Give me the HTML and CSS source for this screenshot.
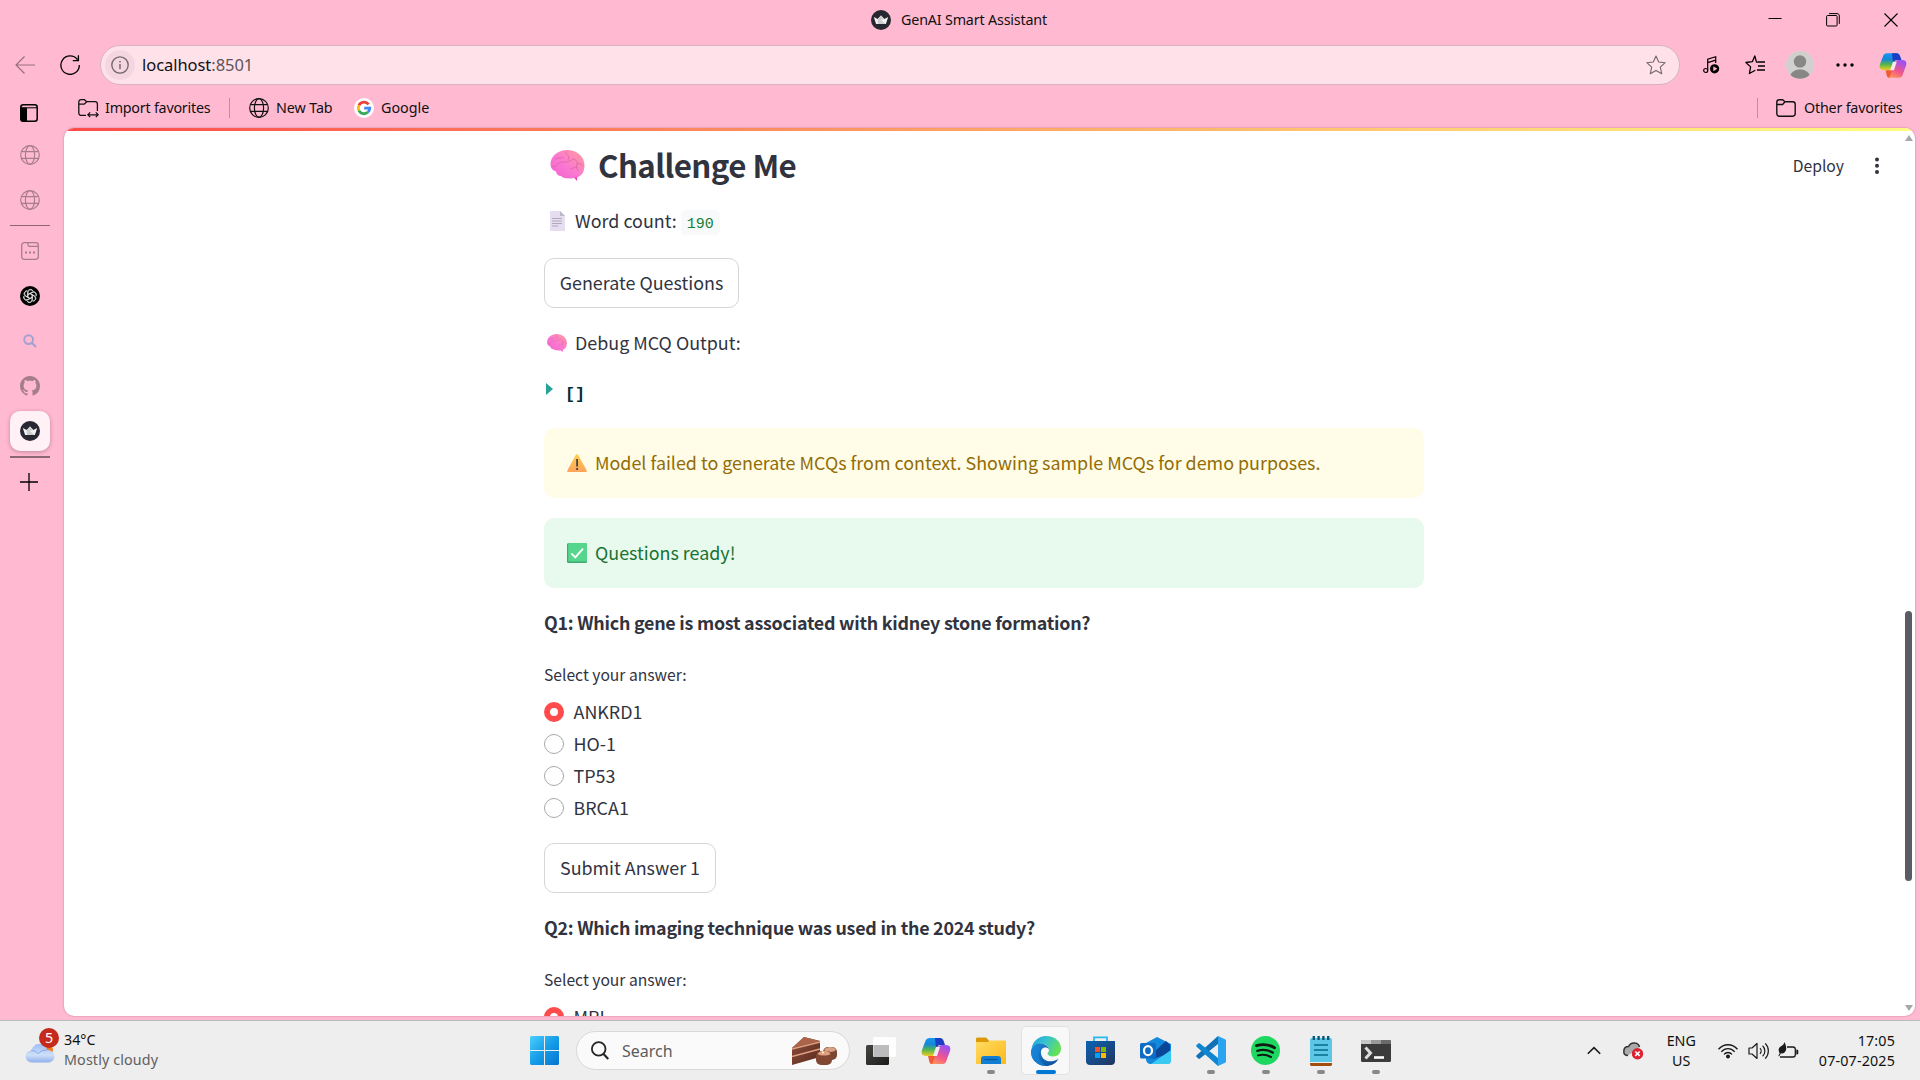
FILE: index.html
```html
<!DOCTYPE html>
<html lang="en">
<head>
<meta charset="utf-8">
<title>GenAI Smart Assistant</title>
<link rel="stylesheet" href="styles.css">
</head>
<body>
<svg class="defs" width="0" height="0" aria-hidden="true">
  <defs>
    <linearGradient id="brainFill" x1="0" y1="1" x2="1" y2="0"><stop offset="0" stop-color="#f062cc"/><stop offset=".45" stop-color="#fb78d2"/><stop offset="1" stop-color="#ff9c9a"/></linearGradient>
    <linearGradient id="copA" x1="0" y1="0" x2="0" y2="1"><stop offset="0" stop-color="#1696f0"/><stop offset=".35" stop-color="#1687d8"/><stop offset=".65" stop-color="#52b550"/><stop offset="1" stop-color="#f4cc20"/></linearGradient>
    <linearGradient id="copB" x1="0" y1="1" x2=".5" y2="0"><stop offset="0" stop-color="#ffa052"/><stop offset=".5" stop-color="#f2558c"/><stop offset="1" stop-color="#a052ee"/></linearGradient>
    <linearGradient id="cloudFill" x1="0" y1="0" x2="0" y2="1"><stop offset="0" stop-color="#9dbdf5"/><stop offset=".6" stop-color="#cfdff9"/><stop offset="1" stop-color="#8fb0ea"/></linearGradient>
    <linearGradient id="winFill" x1="0" y1="0" x2="1" y2="1"><stop offset="0" stop-color="#4ad0ff"/><stop offset=".5" stop-color="#159de8"/><stop offset="1" stop-color="#0672d0"/></linearGradient>
    <linearGradient id="edgeTop" x1="0" y1="0" x2="1" y2=".4"><stop offset="0" stop-color="#1f9fe0"/><stop offset=".5" stop-color="#35c2d0"/><stop offset="1" stop-color="#64e05a"/></linearGradient>
    <linearGradient id="edgeLow" x1="0" y1="0" x2="1" y2="1"><stop offset="0" stop-color="#1c8bdc"/><stop offset="1" stop-color="#0c4a98"/></linearGradient>
    <linearGradient id="folderFill" x1="0" y1="0" x2="1" y2="1"><stop offset="0" stop-color="#ffdb62"/><stop offset="1" stop-color="#fdb81a"/></linearGradient>
    <linearGradient id="storeFill" x1="0" y1="0" x2="1" y2="1"><stop offset="0" stop-color="#0a64b4"/><stop offset="1" stop-color="#22345e"/></linearGradient>
    <linearGradient id="warnFill" x1="0" y1="0" x2="0" y2="1"><stop offset="0" stop-color="#ffd04a"/><stop offset="1" stop-color="#fca45c"/></linearGradient>
    <linearGradient id="paneFill" x1="0" y1="0" x2="1" y2="1"><stop offset="0" stop-color="#44443f"/><stop offset="1" stop-color="#1c1c1c"/></linearGradient>
    <linearGradient id="cakeFill" x1="0" y1="0" x2="1" y2="1"><stop offset="0" stop-color="#8d4f3b"/><stop offset="1" stop-color="#5a2a1e"/></linearGradient>
    <symbol id="globe" viewBox="0 0 20 20"><g fill="none" stroke="currentColor" stroke-width="1.2"><circle cx="10" cy="10" r="9.3"/><ellipse cx="10" cy="10" rx="4.6" ry="9.3"/><path d="M1.5 6.6h17M1.5 13.4h17"/></g></symbol>
    <symbol id="brain" viewBox="0 0 34 31"><path d="M22 26l4.500 5 .3-6z" fill="#f03fbd"/><path d="M0 14C0 6.500 7 0 16.500 0S34 6 34 15.500c0 7-3.500 11.500-9 12-3 1.500-12 1.500-14.500-1.500-2.500 0-4.500-1.500-5-4.500C2 20.500 0 18 0 14z" fill="url(#brainFill)"/><path d="M1 16c4 2.500 5-2 8.500-3.500 3.500-1 8 .5 11.500-2.500M5 9c2.500-2 5 .5 8-2M16 2c-2 2 4 3.500 2 7M22 9c3 0 5 2 5 5 2-1 4.500 0 6 2M20 19c3 0 4-3 7-2M27 14c-2 2-1 5 1 7" fill="none" stroke="#d8609a" stroke-width=".9" stroke-linecap="round" opacity=".75"/></symbol>
    <symbol id="crown" viewBox="0 0 20 20"><circle cx="10" cy="10" r="10" fill="#262731"/><path d="M2.800 7l3.900 1.900L10 5.600l3.300 3.300L17.200 7l-2.300 6.900H5.100z" fill="#f2f2f2"/><path d="M6.700 9.100L10 5.600l3.300 3.500-3.300.9 4.700 3.900H7z" fill="#cdcdcd"/></symbol>
    <symbol id="copilot" viewBox="0 0 30 28"><path d="M9 1h11l-3 9c-1 3-2 8-5 9H5c-4 0-5-3-4-6L4 5c1-3 2-4 5-4z" fill="url(#copA)"/><path d="M14 1h5c2 0 3 1 4 4l1 3h-5c-2 0-3 1-4 3z" fill="#1b3ec4"/><path d="M21 8h4c4 0 5 3 4 6l-3 8c-1 4-2 5-5 5H10l3-8c1-4 3-11 8-11z" fill="url(#copB)"/><path d="M8 19h6l-2 6c-.5 1.500-1 2-2 2-2-1-2-5-3-8z" fill="#f25a34"/><path d="M15 10h4l-3 9h-4z" fill="#f7e9f4"/></symbol>
    <symbol id="folder" viewBox="0 0 20 18"><path d="M.8 4V3.400C.8 1.800 1.800.8 3.300.8h3.400l2.200 2h7.800c1.600 0 2.500 1 2.500 2.500v9.300c0 1.600-1 2.600-2.500 2.600H3.300c-1.500 0-2.500-1-2.500-2.600zM.8 5.500h5.800L9 2.800" fill="none" stroke="currentColor" stroke-width="1.400" stroke-linejoin="round"/></symbol>
  </defs>
</svg>
<div class="browser">
  <header class="titlebar">
    <div class="tab-title"><svg width="20" height="20"><use href="#crown"/></svg><span class="t-title">GenAI Smart Assistant</span></div>
    <div class="window-buttons">
      <svg width="14" height="14" viewBox="0 0 14 14"><path d="M0.500 5.500h13" stroke="#000"/></svg>
      <svg width="14" height="14" viewBox="0 0 14 14" fill="none" stroke="#000"><rect x=".6" y="2.500" width="10.500" height="10.500" rx="1"/><path d="M3 .6h8c1.500 0 2.300.8 2.300 2.300v8"/></svg>
      <svg width="14" height="14" viewBox="0 0 14 14"><path d="M.5.5l13 13M13.500.5l-13 13" stroke="#000" stroke-width="1.100"/></svg>
    </div>
  </header>
  <div class="toolbar">
    <svg class="back" width="20" height="18" viewBox="0 0 20 18"><path d="M9.500.5L1 9l8.500 8.500M1 9h19" fill="none" stroke="#97707f" stroke-width="1.200"/></svg>
    <svg class="reload" width="20" height="20" viewBox="0 0 20 20"><path d="M17.500 4.700A9.200 9.200 0 1 0 19.300 10M18.400.2v5.500h-5.600" fill="none" stroke="#000" stroke-width="1.300"/></svg>
    <div class="address">
      <span class="site-info"><svg width="18" height="18" viewBox="0 0 18 18"><circle cx="9" cy="9" r="8.200" fill="none" stroke="#6f636a" stroke-width="1.300"/><path d="M9 8v5M9 5v1.600" stroke="#6f636a" stroke-width="1.400"/></svg></span>
      <span class="t-url">localhost<span class="port">:8501</span></span>
      <svg class="star" width="20" height="20" viewBox="0 0 20 20"><path d="M10 1l2.700 6 6.500.7-4.900 4.400 1.400 6.600L10 15.400l-5.700 3.300 1.400-6.600L.8 7.700 7.300 7z" fill="none" stroke="#75666e" stroke-width="1.100" stroke-linejoin="round"/></svg>
    </div>
    <svg class="music" width="17" height="18" viewBox="0 0 17 18"><g fill="none" stroke="#000" stroke-width="1.200"><circle cx="2.700" cy="14.500" r="2"/><path d="M4.700 14.500V3.300l8-2.500V7M4.700 6.600l8-2.500"/></g><circle cx="11.600" cy="12.800" r="4.600"/><path d="M10.300 10.300l4 2.500-4 2.500z" fill="#ffbad2"/></svg>
    <svg class="favs" width="21" height="20" viewBox="0 0 21 20"><path d="M13 7.200h-1.500L9.800 1 7.300 6.700.9 7.500l4.700 4.400-1.200 6.600 5.900-3.200M13 7h7M13 11h7M12 15h8" fill="none" stroke="#000" stroke-width="1.300" stroke-linejoin="round"/></svg>
    <svg class="avatar" width="28" height="28" viewBox="0 0 28 28"><circle cx="14" cy="14" r="14" fill="#d2d0ce"/><circle cx="14" cy="10.500" r="6.200" fill="#898785"/><path d="M4.500 24c2-7.500 17-7.500 19 0a14 14 0 0 1-19 0z" fill="#898785"/></svg>
    <svg class="more" width="18" height="4" viewBox="0 0 18 4"><circle cx="2" cy="2" r="1.700"/><circle cx="9" cy="2" r="1.700"/><circle cx="16" cy="2" r="1.700"/></svg>
    <svg class="cop" width="28" height="27"><use href="#copilot"/></svg>
  </div>
  <nav class="favorites">
    <svg class="import" width="21" height="19" viewBox="0 0 21 19"><path d="M8 16.400H3.400C1.900 16.400.8 15.400.8 13.900V3C.8 1.600 1.800.7 3.200.7h3.200l2.300 2H17c1.500 0 2.400 1 2.400 2.400v7M.8 5.100h5.400l2.500-2.400" fill="none" stroke="#111" stroke-width="1.300"/><path d="M10 15.800h10M12.200 13.400L9.800 15.800l2.400 2.400M17.800 13.400l2.400 2.400-2.400 2.400" fill="none" stroke="#111" stroke-width="1.200"/></svg>
    <span class="t-import">Import favorites</span>
    <i class="sep"></i>
    <svg class="newtab" width="20" height="20"><use href="#globe"/></svg>
    <span class="t-newtab">New Tab</span>
    <svg class="google" width="20" height="20" viewBox="0 0 20 20"><circle cx="10" cy="10" r="10" fill="#fff"/><g fill="none" stroke-width="2.800"><path d="M14.600 6.300A5.800 5.800 0 0 0 4.900 7.300" stroke="#ea4335"/><path d="M4.900 7.300a5.800 5.800 0 0 0 0 5.400" stroke="#fbbc05"/><path d="M4.900 12.700a5.800 5.800 0 0 0 8.900 1.600" stroke="#34a853"/><path d="M13.800 14.300a5.800 5.800 0 0 0 2-4.100h-5.600" stroke="#4285f4"/></g></svg>
    <span class="t-google">Google</span>
    <i class="sep sep-right"></i>
    <svg class="folder" width="20" height="18"><use href="#folder"/></svg>
    <span class="t-other">Other favorites</span>
  </nav>
  <div class="body">
    <aside class="rail">
      <div class="slot slot-first"><svg width="18" height="18" viewBox="0 0 18 18"><rect x=".8" y=".8" width="16.400" height="16.400" rx="2.500" fill="none" stroke="#000" stroke-width="1.500"/><path d="M1 4.200h5.500v13H3c-1.500 0-2-1-2-2zM1 3.800h16" stroke="#000" stroke-width="1"/></svg></div>
      <div class="slot dim"><svg width="20" height="20"><use href="#globe"/></svg></div>
      <div class="slot dim"><svg width="20" height="20"><use href="#globe"/></svg></div>
      <i class="rule"></i>
      <div class="slot dim"><svg width="18" height="18" viewBox="0 0 18 18"><rect x=".7" y=".7" width="16.600" height="16.600" rx="2.500" fill="none" stroke="currentColor" stroke-width="1.300"/><path d="M7 .8v2c0 1 .5 1.600 1.500 1.600H17" fill="none" stroke="currentColor" stroke-width="1.200"/><path d="M4 10.400h2M8 10.400h2M12 10.400h2" stroke="currentColor" stroke-width="2"/></svg></div>
      <div class="slot"><svg width="20" height="20" viewBox="0 0 20 20"><circle cx="10" cy="10" r="10"/><g fill="none" stroke="#e8e8e8" stroke-width=".8"><path id="petal" d="M8 11.200V6.600c0-3 3.800-3.700 5.200-1.500M8 8.400l4.100-2.300c2.600-1.300 4.900 1 4 3.500"/><use href="#petal" transform="rotate(60 10 10)"/><use href="#petal" transform="rotate(120 10 10)"/><use href="#petal" transform="rotate(180 10 10)"/><use href="#petal" transform="rotate(240 10 10)"/><use href="#petal" transform="rotate(300 10 10)"/></g></svg></div>
      <div class="slot"><svg width="14" height="14" viewBox="0 0 14 14"><circle cx="5.600" cy="5.600" r="4.400" fill="none" stroke="#a3a0d2" stroke-width="1.900"/><path d="M8.800 8.800l4.200 4.200" stroke="#a3a0d2" stroke-width="2.200"/></svg></div>
      <div class="slot"><svg width="20" height="20" viewBox="0 0 16 16"><path fill="#a77d8d" d="M8 0C3.580 0 0 3.580 0 8c0 3.540 2.290 6.530 5.470 7.590.4.070.55-.17.55-.38 0-.19-.01-.82-.01-1.490-2.010.37-2.530-.49-2.690-.94-.09-.23-.48-.94-.82-1.130-.28-.15-.68-.52-.01-.53.63-.01 1.080.58 1.230.82.72 1.210 1.870.87 2.330.66.070-.52.28-.87.510-1.070-1.780-.2-3.640-.89-3.640-3.950 0-.87.310-1.590.82-2.150-.08-.2-.36-1.020.08-2.120 0 0 .67-.21 2.200.82.640-.18 1.320-.27 2-.27s1.360.09 2 .27c1.530-1.040 2.200-.82 2.200-.82.440 1.100.160 1.920.080 2.120.510.560.820 1.270.820 2.150 0 3.070-1.870 3.750-3.650 3.950.290.250.540.730.540 1.480 0 1.070-.01 1.930-.01 2.200 0 .21.150.46.550.38A8.010 8.010 0 0 0 16 8c0-4.420-3.580-8-8-8z"/></svg></div>
      <div class="slot"><span class="active"><svg width="20" height="20"><use href="#crown"/></svg></span></div>
      <i class="rule rule-thick"></i>
      <div class="slot slot-plus"><svg width="18" height="18" viewBox="0 0 18 18"><path d="M9 0v18M0 9h18" stroke="#000" stroke-width="1.300"/></svg></div>
    </aside>
    <main class="page">
      <div class="app">
        <section class="content">
          <h2 class="heading"><svg width="35" height="31"><use href="#brain"/></svg><span>Challenge Me</span></h2>
          <p class="line line-count"><svg class="doc" width="15" height="20" viewBox="0 0 15 20"><path d="M0 0h10l5 5v15H0z" fill="#e6def0"/><path d="M10 0l5 5h-5z" fill="#bfb6ca"/><path d="M2 7.500h10M2 10h10M2 12.500h10M2 15h6" stroke="#b0a8ba"/></svg><span>Word count:</span><code>190</code></p>
          <button class="btn btn-generate"><span>Generate Questions</span></button>
          <p class="line line-debug"><svg class="mini-brain" width="20" height="18"><use href="#brain"/></svg><span>Debug MCQ Output:</span></p>
          <div class="json"><i></i><span>[]</span></div>
          <div class="alert warning"><svg width="20" height="18" viewBox="0 0 20 18"><path d="M8.900.8c.5-.9 1.700-.9 2.200 0l8.600 15.600c.4.800 0 1.600-.9 1.600H1.200c-.9 0-1.300-.8-.9-1.600z" fill="url(#warnFill)"/><path d="M9.200 5h1.800v7.400H9.200zM9.200 14h1.800v1.900H9.200z" fill="#48434a"/></svg><span>Model failed to generate MCQs from context. Showing sample MCQs for demo purposes.</span></div>
          <div class="alert success"><svg width="20" height="20" viewBox="0 0 20 20"><rect width="20" height="20" rx="1.500" fill="#3fa873"/><rect x="1.200" width="18.800" height="18.500" rx="1" fill="#55d68c"/><path d="M4.300 10.400l4 4 7.700-8.700" fill="none" stroke="#fff" stroke-width="1.900"/></svg><span>Questions ready!</span></div>
          <p class="question">Q1: Which gene is most associated with kidney stone formation?</p>
          <p class="label">Select your answer:</p>
          <div class="option"><i class="radio on"></i><span>ANKRD1</span></div>
          <div class="option"><i class="radio"></i><span>HO-1</span></div>
          <div class="option"><i class="radio"></i><span>TP53</span></div>
          <div class="option"><i class="radio"></i><span>BRCA1</span></div>
          <button class="btn btn-submit"><span>Submit Answer 1</span></button>
          <p class="question">Q2: Which imaging technique was used in the 2024 study?</p>
          <p class="label">Select your answer:</p>
          <div class="option"><i class="radio on"></i><span>MRI</span></div>
        </section>
        <div class="actions"><span class="t-deploy">Deploy</span><svg width="4" height="18" viewBox="0 0 4 18" fill="#31333f"><circle cx="2" cy="2.500" r="2"/><circle cx="2" cy="8.800" r="2"/><circle cx="2" cy="15.100" r="2"/></svg></div>
        <div class="scroll"><i class="up"></i><i class="thumb"></i><i class="down"></i></div>
      </div>
    </main>
  </div>
</div>
<footer class="taskbar">
  <div class="weather">
    <span class="weather-icon"><svg width="30" height="20" viewBox="0 0 30 20"><circle cx="23" cy="7" r="5" fill="#f27a1c"/><path d="M7 19.500a6 6 0 0 1-.8-12C7.500 3.500 10.500.7 14.500.7c4 0 7 2.800 7.700 6.300 4 0 7.300 2.500 7.300 6.200 0 3.800-3 6.300-6.500 6.300z" fill="url(#cloudFill)"/><path d="M6 7.800c3-.5 6 .8 7 3 2-2.500 5-4 9-3.800" fill="none" stroke="#84a8e8"/></svg><b class="badge">5</b></span>
    <span class="weather-text"><span class="t-temp">34°C</span><span class="t-cloudy">Mostly cloudy</span></span>
  </div>
  <div class="apps">
    <svg class="start" width="29" height="29" viewBox="0 0 29 29"><path d="M1 0h13v14H0V1zM15 0h13l1 1v13H15zM0 15h14v14H1l-1-1zM15 15h14v13l-1 1H15z" fill="url(#winFill)"/></svg>
    <div class="search">
      <svg width="18" height="19" viewBox="0 0 18 19"><circle cx="7.700" cy="7.900" r="6.800" fill="none" stroke="#252525" stroke-width="1.800"/><path d="M12.600 13l4.700 5" stroke="#252525" stroke-width="2.200"/></svg>
      <span class="t-search">Search</span>
      <svg class="cake" width="46" height="30" viewBox="0 0 46 30"><path d="M0 12L12 1l16 4v16L0 29z" fill="url(#cakeFill)"/><path d="M0 12L12 1l16 4z" fill="#aa6449"/><path d="M0 13L28 6M0 20.500L28 13" stroke="#dfa083" stroke-width="1.600"/><rect x="31" y="11" width="14" height="13" rx="5" fill="#7b4632"/><path d="M32 14c2-4 11-4 12 0-3 3-9 2-12 0z" fill="#d9a184"/><rect x="24" y="15" width="16" height="14" rx="5" fill="#814733"/><path d="M25.500 18c2-4.500 12-4.500 13 0-3 2-10 2-13 0z" fill="#dda17e"/><circle cx="31" cy="16.500" r="1" fill="#fff0d8"/></svg>
    </div>
    <div class="app-slot"><svg width="30" height="28" viewBox="0 0 30 28"><rect y="8" width="23" height="20" rx="1.500" fill="url(#paneFill)"/><rect x="7" width="23" height="20" rx="1.500" fill="#fff" opacity=".9"/><rect x="7.500" y="8" width="15.500" height="12" fill="#bcbcbc"/></svg></div>
    <div class="app-slot"><svg width="30" height="28"><use href="#copilot"/></svg></div>
    <div class="app-slot running"><svg width="30" height="28" viewBox="0 0 30 28"><path d="M0 2c0-1 .5-1.500 1.500-1.500H10L13 3.500V9H0z" fill="#dc9a08"/><path d="M0 5h12l2-1.500h16V27H0z" fill="url(#folderFill)"/><path d="M5 27v-5c0-2 1-3 3-3h14c2 0 3 1 3 3v5z" fill="#1180d4"/><path d="M8.500 22.500h13" stroke="#0a549d" stroke-width="1.300"/></svg></div>
    <div class="app-slot current"><svg width="30" height="30" viewBox="0 0 30 30"><path d="M.5 13C1.500 5.500 7.500 0 15 0c9 0 15 5.500 15 12.500 0 5-3.500 8-8 8-3.500 0-5.500-1.500-5.500-3 0-1 1.500-1.500 1.500-3.500C18 10 13 7 8.500 8 4.500 8.500 2 10.500.5 13z" fill="url(#edgeTop)"/><path d="M0 15C1 10 5 7 10 7.500c4.500.5 8 3.500 8 6.500 0 0-.5-2.500-3.500-2.500-4 0-5.500 4-4 8 2 5.500 9 8 17 3.500-2.500 4.500-7.500 7-12.500 7C6 30-.5 23 0 15z" fill="url(#edgeLow)"/><path d="M10 12c-5 5-2.500 13 5 18C6 30-.5 23 0 15c.5-3 4-5.500 10-3z" fill="#1585d8" opacity=".65"/></svg></div>
    <div class="app-slot"><svg width="29" height="29" viewBox="0 0 29 29"><path d="M8 6V1.300h13V6" fill="none" stroke="#28b9f0" stroke-width="1.800"/><path d="M0 5h29v20c0 2.500-1.500 4-4 4H4c-2.500 0-4-1.500-4-4z" fill="url(#storeFill)"/><path d="M9 11h5v5H9z" fill="#f25022"/><path d="M15 11h5v5h-5z" fill="#7fba00"/><path d="M9 17h5v5H9z" fill="#00a4ef"/><path d="M15 17h5v5h-5z" fill="#ffb900"/></svg></div>
    <div class="app-slot"><svg width="31" height="27" viewBox="0 0 31 27"><path d="M6 6L17 0l14 7v15c0 3-1 5-4 5H11c-3 0-5-2-5-5z" fill="#1289dc"/><path d="M30 8v8L13 22l-1-5L26 4z" fill="#0b4698"/><path d="M31 13v9c0 3-1 5-4 5H11z" fill="#39c9f2"/><rect y="6" width="16" height="15.500" rx="1.500" fill="#0f6cc4"/><ellipse cx="8" cy="13.700" rx="4" ry="4.500" fill="none" stroke="#fff" stroke-width="2.200"/></svg></div>
    <div class="app-slot running"><svg width="30" height="30" viewBox="0 0 30 30"><path d="M22 0v8L4 22.500c-.6.500-1.200.5-1.700 0L.6 21c-.6-.6-.6-1.200 0-1.800z" fill="#1272b8"/><path d="M22 30v-8L4 7.500c-.6-.5-1.200-.5-1.700 0L.6 9c-.6.600-.6 1.200 0 1.800z" fill="#0f86cf"/><path d="M22 0l7 3.200c.7.300 1 .8 1 1.600v20.400c0 .8-.3 1.300-1 1.600L22 30z" fill="#2aa3f0"/></svg></div>
    <div class="app-slot running"><svg width="29" height="29" viewBox="0 0 29 29"><circle cx="14.500" cy="14.500" r="14.500" fill="#1ed760"/><g fill="none" stroke="#0e1a12" stroke-linecap="round"><path d="M5.500 9.700c6-1.800 13-1 18 2" stroke-width="2.900"/><path d="M6.300 14.800c5-1.500 11-.8 15.500 1.800" stroke-width="2.400"/><path d="M7 19.400c4.500-1.200 9-.6 13 1.600" stroke-width="2"/></g></svg></div>
    <div class="app-slot running"><svg width="22" height="30" viewBox="0 0 22 30"><rect y="2" width="22" height="26" rx="1.500" fill="#5cc6e6"/><path d="M0 27h22v1c0 1.500-.5 2-2 2H2c-1.500 0-2-.5-2-2z" fill="#a34d0c"/><path d="M0 26.500h22" stroke="#eee"/><path d="M3.800 0v4M8.600 0v4M13.400 0v4M18.200 0v4" stroke="#0a5878" stroke-width="2.400"/><path d="M4 9h14M4 14h14M4 19h14" stroke="#076a90" stroke-width="1.700"/></svg></div>
    <div class="app-slot running"><svg width="30" height="22" viewBox="0 0 30 22"><rect width="30" height="22" rx="1.500" fill="#3b3b3b"/><path d="M0 4V1.500C0 .5.500 0 1.500 0H10v4z" fill="#c8c8c8"/><path d="M10 0h10v4H10z" fill="#9a9a9a"/><path d="M20 0h8.500c1 0 1.500.5 1.500 1.500V4H20z" fill="#6b6b6b"/><path d="M4.500 7.500l5 5.500-5 5.500" fill="none" stroke="#ddd" stroke-width="3"/><path d="M13 17.500h10" stroke="#fff" stroke-width="2.600"/></svg></div>
  </div>
  <div class="tray">
    <svg class="chev" width="14" height="9" viewBox="0 0 14 9"><path d="M.8 7.800L7 1.600l6.200 6.200" fill="none" stroke="#1a1a1a" stroke-width="1.600"/></svg>
    <svg class="cloud" width="21" height="18" viewBox="0 0 21 18"><path d="M5 13.500C2 13.500.8 11.500.8 9.500c0-3 2-5 4.700-5C7 1.500 10 .7 12 1c2.500.3 4 2 4.500 4" fill="#aaa" stroke="#333" stroke-width="1.500"/><circle cx="14.500" cy="11.700" r="5.700" fill="#dc2230"/><path d="M12.300 9.500l4.400 4.400M16.700 9.500l-4.400 4.400" stroke="#fff" stroke-width="1.500"/></svg>
    <span class="lang"><span>ENG</span><span>US</span></span>
    <svg class="wifi" width="20" height="16" viewBox="0 0 20 16"><g fill="none" stroke="#1a1a1a" stroke-width="1.400"><path d="M.5 6.300c5.200-6 13.800-6 19 0M3.300 8.800c3.800-4.200 9.600-4.200 13.400 0M6 11.400c2.300-2.500 5.700-2.500 8 0"/></g><circle cx="10" cy="13.500" r="2" fill="#1a1a1a"/></svg>
    <svg class="volume" width="21" height="18" viewBox="0 0 21 18"><path d="M1 6h3l5-4.500v15L4 12H1zM12 6.200c1.500 1.500 1.500 4 0 5.600M14.600 3.800c3 2.800 3 7.600 0 10.400M17.200 1.400c4.200 4 4.200 11.200 0 15.200" fill="none" stroke="#1a1a1a" stroke-width="1.200" stroke-linejoin="round"/></svg>
    <svg class="battery" width="21" height="17" viewBox="0 0 21 17"><path d="M9 5h6c1.500 0 2.300.8 2.300 2.300v5.400c0 1.500-.8 2.300-2.300 2.300H2" fill="none" stroke="#1a1a1a" stroke-width="1.300"/><path d="M18.300 7.500c1.500 0 2 .5 2 1.500v2c0 1-.5 1.500-2 1.500zM6.500 0C8 3 9.500 8 6.500 10.500c-1.500 1.200-3 1-3.500.8L1 14.500l-.6-.8 1.300-2.500C-.5 8 1 5 3.500 4 5 3.300 6 2 6.500 0z" fill="#1a1a1a"/></svg>
    <span class="clock"><span class="t-time">17:05</span><span class="t-date">07-07-2025</span></span>
  </div>
</footer>
</body>
</html>
```
FILE: styles.css
```css
* { box-sizing: border-box; }
body { margin: 0; width: 1920px; height: 1080px; overflow: hidden; font: 14.300px/20px "Noto Sans", sans-serif; color: #111; background: #ffbad2; display: flex; flex-direction: column; }
.defs { position: absolute; }
svg { display: block; flex: none; }
i { display: block; flex: none; }
span { white-space: nowrap; }
p, h2 { margin: 0; }

.browser { height: 1020px; display: flex; flex-direction: column; background: #ffbad2; }
.titlebar { height: 45px; display: flex; justify-content: space-between; padding: 10px 22px 0 871px; flex: none; }
.tab-title { display: flex; gap: 10px; height: 20px; letter-spacing: -.17px; }
.window-buttons { display: flex; gap: 44px; padding-top: 3px; }

.toolbar { height: 40px; display: flex; align-items: center; padding-left: 15px; flex: none; }
.reload { margin-left: 25px; }
.address { margin-left: 20px; width: 1580px; height: 40px; border: 1px solid #d6b3c1; border-radius: 20px; background: #ffe1ea; display: flex; align-items: center; padding: 0 13px 0 4px; }
.site-info { width: 30px; height: 30px; border-radius: 50%; background: #f4d6e0; display: grid; place-items: center; }
.t-url { margin-left: 7px; font-size: 16.500px; letter-spacing: -.05px; }
.port { color: #5e545a; }
.star { margin-left: auto; }
.music { margin-left: 23px; }
.favs { margin-left: 25px; }
.avatar { margin-left: 20px; }
.more { margin-left: 22px; }
.cop { margin-left: 25px; }

.favorites { height: 43px; display: flex; align-items: center; padding: 3px 18px 0 78px; flex: none; }
.t-import { margin-left: 6px; width: 105px; letter-spacing: -.22px; }
.sep { width: 1px; height: 20px; background: #c58fa3; margin-left: 19px; }
.newtab { margin-left: 19px; }
.t-newtab { margin-left: 7px; width: 56px; letter-spacing: -.1px; }
.google { margin-left: 22px; }
.t-google { margin-left: 7px; }
.sep-right { margin-left: auto; }
.folder { margin-left: 18px; }
.t-other { margin-left: 8px; width: 98px; letter-spacing: -.2px; }

.body { flex: 1; display: flex; min-height: 0; }
.rail { width: 64px; display: flex; flex-direction: column; margin-top: -40px; flex: none; }
.slot { height: 45px; width: 60px; display: grid; place-items: center; flex: none; }
.slot-first { margin-top: 2px; width: 58px; }
.dim { color: #a77d8d; }
.slot-first + .dim { margin-top: -3px; }
.rule { width: 40px; height: 1px; margin: 3px 0 2px 10px; background: #8c6673; }
.active { width: 40px; height: 40px; border-radius: 10px; background: #fff1f6; display: grid; place-items: center; box-shadow: 0 1px 4px rgba(110, 50, 75, .4); }
.rule-thick { height: 2px; margin: 3px 0 1px 10px; }
.slot-plus { width: 58px; }

.page { width: 1851px; height: 888px; border-radius: 10px; background: #fff; overflow: hidden; box-shadow: 0 0 2px rgba(150, 70, 100, .6); flex: none; }
.page::before { content: ""; display: block; height: 3px; background: linear-gradient(90deg, #ff4b4b, #fffd80); }
.app { display: flex; height: 885px; padding-left: 480px; font-family: "Noto Sans CJK SC", "Noto Sans", sans-serif; color: #31333f; }
.content { width: 880px; flex: none; font-size: 17.900px; line-height: 30px; }
.heading { display: flex; align-items: center; height: 48px; margin-top: 10px; padding-left: 6px; gap: 13px; font-size: 31.300px; line-height: 48px; font-weight: 700; letter-spacing: -.6px; }
.heading span { padding-bottom: 1px; }
.line { display: flex; align-items: center; height: 30px; }
.line span, .alert span, .option span { padding-bottom: 2px; }
.line-count { margin-top: 17px; }
.doc { margin: 0 10px 0 6px; }
code { margin-left: 4px; width: 39px; height: 25px; border-radius: 5px; background: #f8f9fb; color: #158237; font: 15px/29px "Liberation Mono", monospace; text-align: center; position: relative; top: 1px; }
.btn { display: block; height: 50px; padding: 0 0 3px; border: 1px solid #d6d6d9; border-radius: 10px; background: #fff; font: inherit; color: inherit; text-align: center; }
.btn-generate { width: 195px; margin-top: 22px; }
.line-debug { margin-top: 20px; }
.mini-brain { margin: 0 8px 0 3px; }
.json { display: flex; height: 30px; margin-top: 20px; color: #002b36; }
.json i { margin: 5px 12px 0 2px; width: 0; height: 0; border: solid transparent; border-width: 6px 0 6px 7px; border-left-color: #2aa198; }
.json span { font: bold 16.700px/34px "Liberation Mono", monospace; }
.alert { display: flex; align-items: center; height: 70px; margin-top: 20px; padding-left: 23px; gap: 8px; border-radius: 10px; }
.warning { background: #fffce7; color: #926c05; }
.success { background: #e8f9ee; color: #177233; }
.question { height: 30px; margin-top: 20px; line-height: 28px; font-weight: 700; letter-spacing: -.25px; }
.label { height: 30px; margin: 22px 0 6px; font-size: 15.650px; }
.option { display: flex; align-items: center; height: 32px; gap: 9.500px; }
.radio { width: 20px; height: 20px; border-radius: 50%; border: 1.500px solid #a9aaaf; background: #fff; }
.radio.on { border: 6px solid #ff4b4b; }
.btn-submit { width: 172px; margin-top: 19px; }
.actions { flex: 1; display: flex; justify-content: flex-end; align-items: center; height: 30px; margin-top: 20px; padding-right: 25px; gap: 31px; font-size: 15.700px; }
.scroll { width: 11px; flex: none; display: flex; flex-direction: column; align-items: center; padding: 4px 2px 5px 0; }
.up { border: solid transparent; border-width: 0 4px 6px; border-bottom-color: #a6a6ac; }
.thumb { width: 7px; height: 270px; margin-top: 470px; border-radius: 4px; background: #5b5b66; }
.down { margin-top: auto; border: solid transparent; border-width: 6px 4px 0; border-top-color: #a6a6ac; }

.taskbar { height: 60px; border-top: 1px solid #bdbcbd; background: #eee; display: grid; grid-template-columns: 530px 1fr 330px; flex: none; }
.weather { display: flex; padding-left: 25px; }
.weather-icon { width: 39px; padding-top: 22px; position: relative; }
.badge { position: absolute; left: 14px; top: 7px; width: 20px; height: 20px; border-radius: 50%; background: #c42b1c; color: #fff; font-weight: 400; text-align: center; }
.weather-text { display: flex; flex-direction: column; padding-top: 9px; }
.t-cloudy { color: #606060; letter-spacing: .13px; }
.apps { display: flex; align-items: center; height: 59px; }
.search { margin: 0 3px 0 17px; width: 274px; height: 39px; border: 1px solid #d8d8d8; border-radius: 20px; background: #fafafa; display: flex; align-items: center; padding: 0 11px 0 14px; }
.t-search { margin-left: 13px; font-size: 16px; color: #5c5c5c; }
.cake { margin-left: auto; }
.app-slot { width: 55px; height: 59px; display: flex; flex-direction: column; align-items: center; justify-content: center; position: relative; }
.running::after { content: ""; position: absolute; bottom: 6px; width: 8px; height: 4px; border-radius: 2px; background: #888; }
.current { width: 49px; height: 49px; margin: 0 3px; border: 1px solid #e2e2e2; border-radius: 5px; background: #f8f8f8; }
.current::after { content: ""; position: absolute; bottom: 0; width: 20px; height: 4px; border-radius: 2px; background: #0078d4; }
.tray { display: flex; align-items: center; justify-content: flex-end; padding-right: 25px; height: 59px; }
.cloud { margin-left: 22px; }
.lang { display: flex; flex-direction: column; align-items: center; width: 30px; margin-left: 23px; }
.wifi { margin-left: 22px; }
.volume { margin-left: 10px; }
.battery { margin-left: 9px; }
.clock { display: flex; flex-direction: column; align-items: flex-end; width: 78px; margin-left: 20px; letter-spacing: .15px; }
.clock { width: 79px; }
```
